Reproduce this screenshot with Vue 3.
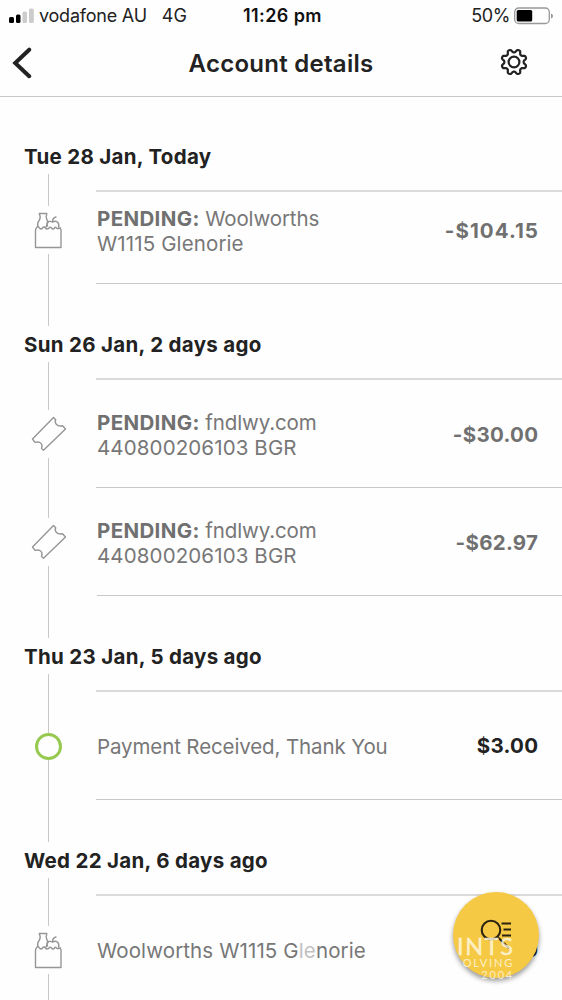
<script setup>
const groups = [
  {
    date: 'Tue 28 Jan, Today',
    rows: [{ icon: 'bag', pending: true, lines: ['Woolworths', 'W1115 Glenorie'], amount: '-$104.15', compact: true }],
  },
  {
    date: 'Sun 26 Jan, 2 days ago',
    rows: [
      { icon: 'ticket', pending: true, lines: ['fndlwy.com', '440800206103 BGR'], amount: '-$30.00' },
      { icon: 'ticket', pending: true, lines: ['fndlwy.com', '440800206103 BGR'], amount: '-$62.97' },
    ],
  },
  {
    date: 'Thu 23 Jan, 5 days ago',
    rows: [{ icon: 'ring', lines: ['Payment Received, Thank You'], amount: '$3.00', credit: true }],
  },
  {
    date: 'Wed 22 Jan, 6 days ago',
    rows: [{ icon: 'bag', lines: ['Woolworths W1115 Glenorie'], amount: '-$8.00', credit: true, masked: true }],
  },
]

const hasDigits = (line) => /\d/.test(line)

// Eight-toothed cog outline, with valleys on the axes
const cog = Array.from({ length: 96 }, (_, i) => {
  const a = (i / 96) * Math.PI * 2
  const r = 11.2 - 1.6 * Math.tanh(1.8 * Math.cos(8 * a))
  return `${i ? 'L' : 'M'}${(14 + r * Math.cos(a)).toFixed(2)} ${(14 + r * Math.sin(a)).toFixed(2)}`
}).join('') + 'Z'
</script>

<template>
  <div class="screen">
    <div class="status">
      <div class="carrier">
        <svg class="signal" width="26" height="16" viewBox="0 0 26 16">
          <rect x="0" y="9" width="5" height="6" rx="1.5" fill="#000" />
          <rect x="7" y="6.5" width="4.5" height="8.5" rx="1.5" fill="#000" />
          <rect x="13.5" y="3.5" width="4.5" height="11.5" rx="1.5" fill="#ccc" />
          <rect x="20" y="0.5" width="4.8" height="14.5" rx="1.5" fill="#ccc" />
        </svg>
        <span class="network">vodafone AU</span>
        <span class="radio">4G</span>
      </div>
      <div class="clock">11:26 pm</div>
      <div class="power">
        <span class="percent">50%</span>
        <svg width="40" height="18" viewBox="0 0 40 18">
          <rect x="0.7" y="1" width="34.6" height="15.5" rx="4" fill="none" stroke="#999" stroke-width="1.3" />
          <rect x="2.7" y="3" width="15.5" height="11.5" rx="1.5" fill="#000" />
          <path d="M37 6.5Q39 7 39 9T37 11.5Z" fill="#999" />
        </svg>
      </div>
    </div>
    <header class="bar">
      <svg class="back" width="22" height="34" viewBox="0 0 22 34">
        <path d="M19.2 3.7L5.2 17L19.2 30.2" fill="none" stroke="#222" stroke-width="4" stroke-linecap="round" stroke-linejoin="miter" />
      </svg>
      <h1>Account details</h1>
      <svg class="gear" width="28" height="28" viewBox="0 0 28 28">
        <g fill="none" stroke="#222" stroke-width="2.2">
          <path :d="cog" stroke-linejoin="round" />
          <circle cx="14" cy="14" r="5.4" />
        </g>
      </svg>
    </header>
    <main>
      <section v-for="g in groups" :key="g.date" class="group">
        <h2>{{ g.date }}</h2>
        <div class="rows">
          <div v-for="(r, i) in g.rows" :key="i" class="row" :class="{ compact: r.compact, pending: r.pending }">
            <div class="mark" :class="r.icon">
              <svg v-if="r.icon === 'bag'" class="bag-icon" width="30" height="38" viewBox="0 0 30 38">
                <g fill="none" stroke="#969696" stroke-width="1.4" stroke-linejoin="round" stroke-linecap="round">
                  <path d="M2.5 15.5L1.5 18V35.5H27V18L26 15.5Q24 17.5 22.5 16Q21.5 14.5 20.5 16Q19 18 17.5 16Q16 14.5 15 16Q13 18 11.5 16Q10 14 8.5 16Q7 18 5.5 16L4 14.5Z" />
                  <path d="M3.8 14.5Q3 10.5 5.5 8Q7 5 5.2 1.5H12.8Q11.5 5 13 8Q14.5 10 13 12.5L12 15" />
                  <path d="M13.5 14Q11.8 10.5 15 9.5Q17 9 18.5 10Q21 8.5 23.5 10Q25.5 12 24.5 15" />
                  <path d="M18.5 10Q18.5 6 22 5" />
                </g>
              </svg>
              <svg v-else-if="r.icon === 'ticket'" width="36" height="36" viewBox="0 0 36 36">
                <path d="M22.5 1.5L24.7 3.7C23.2 6.5 25.5 10.8 31.5 9.8L34.5 13L12.5 34.2L10.5 32.5C12 28.5 10 24.8 4 26.4L1.5 23Z" fill="none" stroke="#969696" stroke-width="1.4" stroke-linejoin="round" />
              </svg>
              <span v-else class="ring" />
            </div>
            <div class="detail">
              <p class="name">
                <template v-for="(line, n) in r.lines" :key="n">
                  <br v-if="n"><b v-if="r.pending && !n">PENDING:</b>{{ r.pending && !n ? ' ' : '' }}<span :class="{ wide: hasDigits(line) }">{{ line }}</span>
                </template>
                <i v-if="r.masked" class="veil" />
              </p>
              <span class="amount" :class="{ credit: r.credit }">{{ r.amount }}</span>
            </div>
          </div>
        </div>
      </section>
    </main>
    <button class="fab" aria-label="Search transactions">
      <svg class="find" width="32" height="32" viewBox="0 0 32 32">
        <g fill="none" stroke="#2b2410" stroke-width="2.1">
          <circle cx="11" cy="11" r="9.3" />
          <path d="M17.5 18L29 29" />
          <path d="M21.5 4.5H31M23.5 10.5H31M22 16.5H31" />
        </g>
      </svg>
      <span class="stamp">
        <span class="s1">INTS</span>
        <span class="s2">OLVING</span>
        <span class="s3">2004</span>
      </span>
    </button>
  </div>
</template>

<style>
html, body { margin: 0; background: #fefefe; overflow: hidden; }
</style>

<style scoped>
.screen { position: relative; width: 562px; height: 1000px; overflow: hidden; background: #fefefe; font-family: Inter, "Liberation Sans", sans-serif; color: #222; }
.status { display: grid; grid-template-columns: 1fr auto 1fr; align-items: center; height: 31px; padding: 0 8px; font-size: 18px; line-height: 31px; }
.carrier { display: flex; align-items: center; white-space: nowrap; }
.signal { margin: 0 4px 0 1px; }
.network { letter-spacing: -0.22px; }
.radio { margin-left: 15px; }
.clock { padding-left: 3px; font-weight: 600; color: #111; letter-spacing: 0.4px; }
.power { display: flex; align-items: center; justify-content: flex-end; gap: 4px; }
.percent { letter-spacing: -0.4px; }
.bar { display: grid; grid-template-columns: 60px 1fr 60px; align-items: center; height: 65px; border-bottom: 1px solid #c8c8c8; }
.back { margin: -2px 0 0 10px; }
.gear { margin: -3px 0 0 -2px; }
h1 { margin: 0; text-align: center; font-size: 24px; font-weight: 600; line-height: 36px; letter-spacing: 0.27px; }
main { padding-top: 41px; }
.group { position: relative; padding-bottom: 44px; }
.group::before { content: ""; position: absolute; left: 48px; top: 0; bottom: 0; width: 1px; background: #c8c8c8; }
h2 { position: relative; box-sizing: border-box; margin: 0 0 16px; padding: 1px 0 0 24px; height: 36px; line-height: 35px; font-size: 20.5px; font-weight: 650; letter-spacing: 0.3px; background: #fefefe; white-space: nowrap; }
.row { display: flex; height: 108px; }
.row.compact { height: 92px; }
.mark { position: relative; flex: none; width: 50px; height: 48px; margin: 32px 0 0 24px; display: flex; align-items: center; justify-content: center; background: #fefefe; }
.mark.ring { background: none; }
.bag-icon { margin-top: 2px; }
.compact .mark { margin-top: 16px; }
.ring .ring { width: 21px; height: 21px; margin-right: 1px; border: 3px solid #96c950; border-radius: 50%; background: #fefefe; }
.detail { flex: 1; display: flex; align-items: center; justify-content: space-between; box-sizing: border-box; margin-left: 23px; padding: 1px 24px 0 0; border-bottom: 1px solid #c8c8c8; margin-bottom: -2px; }
.pending .detail { padding-top: 5px; }
.row:first-child .detail { border-top: 2px solid #dadada; margin-left: 22px; padding-left: 1px; }
.pending:first-child .detail { padding-top: 3px; }
.compact:first-child .detail { padding-top: 1px; padding-bottom: 14px; }
.name { position: relative; margin: 0; font-size: 20.5px; line-height: 25px; color: #777; letter-spacing: -0.12px; white-space: nowrap; }
.name b { font-weight: 650; color: #707070; letter-spacing: 0.35px; }
.wide { letter-spacing: 0.12px; }
.amount { font-size: 20.5px; line-height: 24px; margin-top: -1px; font-weight: 650; letter-spacing: 0.3px; margin-right: -0.3px; color: #707070; }
.compact .amount { letter-spacing: 1.05px; margin-right: -1px; }
.amount.credit { color: #222; }
.veil { position: absolute; left: 203px; top: 0; width: 17px; height: 25px; background: rgba(254, 254, 254, .55); }
.fab { position: absolute; left: 453px; top: 892px; width: 86px; height: 86px; padding: 0; border: 0; border-radius: 50%; background: #f6c945; box-shadow: 0 3px 5px rgba(0, 0, 0, .4); font-family: Lato, sans-serif; }
.find { position: absolute; left: 27px; top: 27px; }
.stamp { position: absolute; right: 26px; top: 44px; display: flex; flex-direction: column; align-items: flex-end; color: rgba(255, 250, 230, .8); white-space: nowrap; }
.s1 { font-size: 23.5px; line-height: 20px; letter-spacing: 1.6px; margin-right: -1.6px; -webkit-text-stroke: 0.4px rgba(255, 250, 230, .8); }
.s2 { font-size: 11px; line-height: 14px; letter-spacing: 1.8px; margin-right: -1px; }
.s3 { font-size: 11px; line-height: 10px; letter-spacing: 1.8px; margin-right: -1px; }
</style>
